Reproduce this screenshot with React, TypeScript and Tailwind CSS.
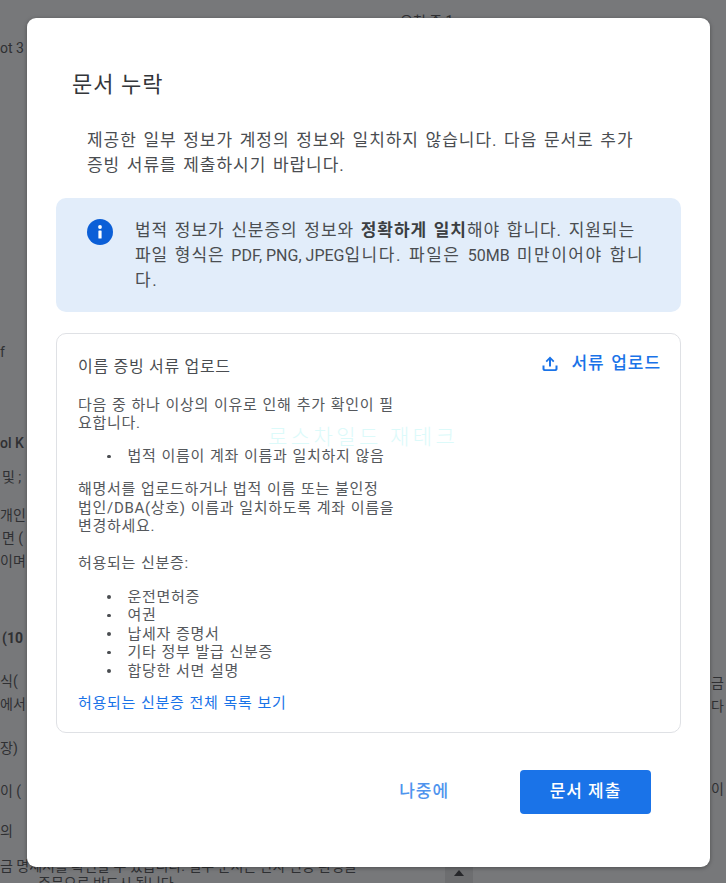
const FONT = "font-['Roboto','Noto_Sans_CJK_KR',sans-serif]";

function BackgroundScraps() {
  const scraps: { text: string; className: string }[] = [
    { text: 'ot 3', className: 'left-0 top-[38px]' },
    { text: 'f', className: 'left-0 top-[342px] text-[#2a4f7d]' },
    { text: 'ol K', className: 'left-0 top-[433px] font-medium' },
    { text: '및 ;', className: 'left-[2px] top-[467px]' },
    { text: '개인', className: 'left-0 top-[505px]' },
    { text: '면 (', className: 'left-[2px] top-[528px]' },
    { text: '이며', className: 'left-0 top-[551px]' },
    { text: '(10', className: 'left-[2px] top-[628px] font-bold' },
    { text: '식(', className: 'left-0 top-[671px]' },
    { text: '에서', className: 'left-0 top-[694px]' },
    { text: '장)', className: 'left-0 top-[738px]' },
    { text: '이 (', className: 'left-0 top-[781px]' },
    { text: '의', className: 'left-0 top-[821px]' },
    { text: '금', className: 'left-[711px] top-[673px]' },
    { text: '다', className: 'left-[711px] top-[696px]' },
    { text: '이', className: 'left-[711px] top-[779px]' },
    { text: '요청 중 1', className: 'left-[400px] top-[11px]' },
    { text: '금 명세서를 확인할 수 있습니다. 일부 문서는 만자 인증 완성을', className: 'left-0 top-[856px]' },
    { text: '주문으로 반드시 됩니다', className: 'left-[38px] top-[873px]' },
  ];

  return (
    <>
      {scraps.map((s) => (
        <span key={s.text} className={`absolute text-[14px] leading-[20px] whitespace-nowrap text-[#2f3033] ${s.className}`}>
          {s.text}
        </span>
      ))}
      <div className="absolute left-[445px] top-[865px] h-[18px] w-[28px] bg-[#6d6e70]">
        <div className="mx-auto mt-[5px] h-0 w-0 border-x-[5px] border-b-[6px] border-x-transparent border-b-[#26272a]" />
      </div>
    </>
  );
}

function InfoIcon() {
  return (
    <svg width="26" height="26" viewBox="0 0 26 26" className="mt-[1px] shrink-0">
      <circle cx="13" cy="13" r="13" fill="#0b5fd7" />
      <rect x="11.4" y="11.5" width="3.2" height="8" rx="0.6" fill="#fff" />
      <circle cx="13" cy="8" r="1.9" fill="#fff" />
    </svg>
  );
}

function UploadIcon() {
  return (
    <svg width="18" height="18" viewBox="0 0 18 18" fill="#1a73e8" className="shrink-0">
      <path d="M9 1.5 4.6 5.9l1.3 1.3L8 5.1v6.4h2V5.1l2.1 2.1 1.3-1.3z" />
      <path d="M1.5 10.5h2v3.2c0 .3.2.5.5.5h10c.3 0 .5-.2.5-.5v-3.2h2v3.6c0 1.1-.9 2-2 2H3.5c-1.1 0-2-.9-2-2z" />
    </svg>
  );
}

function Bullet({ children }: { children: string }) {
  return (
    <li className="flex items-center">
      <span className="ml-[29px] mr-[17px] size-[3.5px] shrink-0 rounded-full bg-[#4a4d51]" />
      {children}
    </li>
  );
}

export default function App() {
  return (
    <div className={`relative h-[883px] w-[726px] overflow-hidden bg-[#77787a] pl-[27px] pt-[18px] ${FONT}`}>
      <BackgroundScraps />

      <div className="relative flex h-[849px] w-[683px] flex-col rounded-[9px] bg-white px-[29px] pt-[51px] shadow-[0_1px_4px_rgba(0,0,0,0.35)]">
        <h2 className="pl-[16px] text-[22px] font-normal leading-[32px] tracking-[1px] text-[#33363a]">문서 누락</h2>

        <p className="mt-[27px] w-[594px] pl-[31px] text-[17px] leading-[25px] tracking-[0.95px] [word-spacing:1.5px] text-[#4a4d51]">
          제공한 일부 정보가 계정의 정보와 일치하지 않습니다. 다음 문서로 추가 증빙 서류를 제출하시기 바랍니다.
        </p>

        <div className="mt-[20px] flex h-[114px] w-[625px] gap-[22px] rounded-[10px] bg-[#e2edfa] pl-[31px] pr-[26px] pt-[20px]">
          <InfoIcon />
          <p className="text-[17px] leading-[25px] tracking-[0.95px] [word-spacing:1.5px] text-[#4a4d51]">
            법적 정보가 신분증의 정보와 <strong className="font-bold text-[#3c3f43]">정확하게 일치</strong>해야 합니다. 지원되는 파일 형식은{' '}
            <span className="text-[16px] tracking-normal [word-spacing:0]">PDF, PNG, JPEG</span>
            <span className="tracking-[1.5px]">입니다. 파일은 <span className="text-[16px] tracking-normal">50MB</span> 미만이어야 합니다.</span>
          </p>
        </div>

        <div className="mt-[21px] h-[400px] w-[625px] rounded-[10px] border border-[#dfe1e5] px-[21px] pt-[18px]">
          <div className="flex items-start justify-between">
            <h3 className="mt-[3px] text-[16px] font-normal leading-[24px] tracking-[0.7px] text-[#4a4d51]">이름 증빙 서류 업로드</h3>
            <button className="-mr-[2px] flex h-[24px] items-center gap-[12px] text-[17px] font-medium tracking-[0.95px] [word-spacing:1.5px] text-[#1a73e8]">
              <UploadIcon />
              서류 업로드
            </button>
          </div>

          <div className="relative mt-[16.5px] w-[319px] text-[15px] leading-[18.5px] tracking-[0.7px] [word-spacing:0.6px] text-[#55585c]">
            <p>다음 중 하나 이상의 이유로 인해 추가 확인이 필요합니다.</p>
            <ul className="mt-[14.5px]">
              <Bullet>법적 이름이 계좌 이름과 일치하지 않음</Bullet>
            </ul>
            <p className="mt-[14.5px]">해명서를 업로드하거나 법적 이름 또는 불인정 법인/DBA(상호) 이름과 일치하도록 계좌 이름을 변경하세요.</p>
            <p className="mt-[18.5px]">허용되는 신분증:</p>
            <ul className="mt-[15px]">
              <Bullet>운전면허증</Bullet>
              <Bullet>여권</Bullet>
              <Bullet>납세자 증명서</Bullet>
              <Bullet>기타 정부 발급 신분증</Bullet>
              <Bullet>합당한 서면 설명</Bullet>
            </ul>
            <a className="mt-[14px] block text-[#1a73e8]">허용되는 신분증 전체 목록 보기</a>
          </div>
        </div>

        <div className="mt-[37px] flex w-[595px] items-center justify-end gap-[71px]">
          <button className="text-[17px] font-medium tracking-[0.95px] text-[#4f94ee]">나중에</button>
          <button className="h-[44px] w-[131px] rounded-[4px] bg-[#1a73e8] text-[17px] font-medium tracking-[0.95px] text-white">문서 제출</button>
        </div>
      </div>

      <span className="absolute left-[268px] top-[423px] text-[21px] font-light leading-[28px] tracking-[3.4px] text-[#dcfafa]">로스차일드 재테크</span>
    </div>
  );
}
